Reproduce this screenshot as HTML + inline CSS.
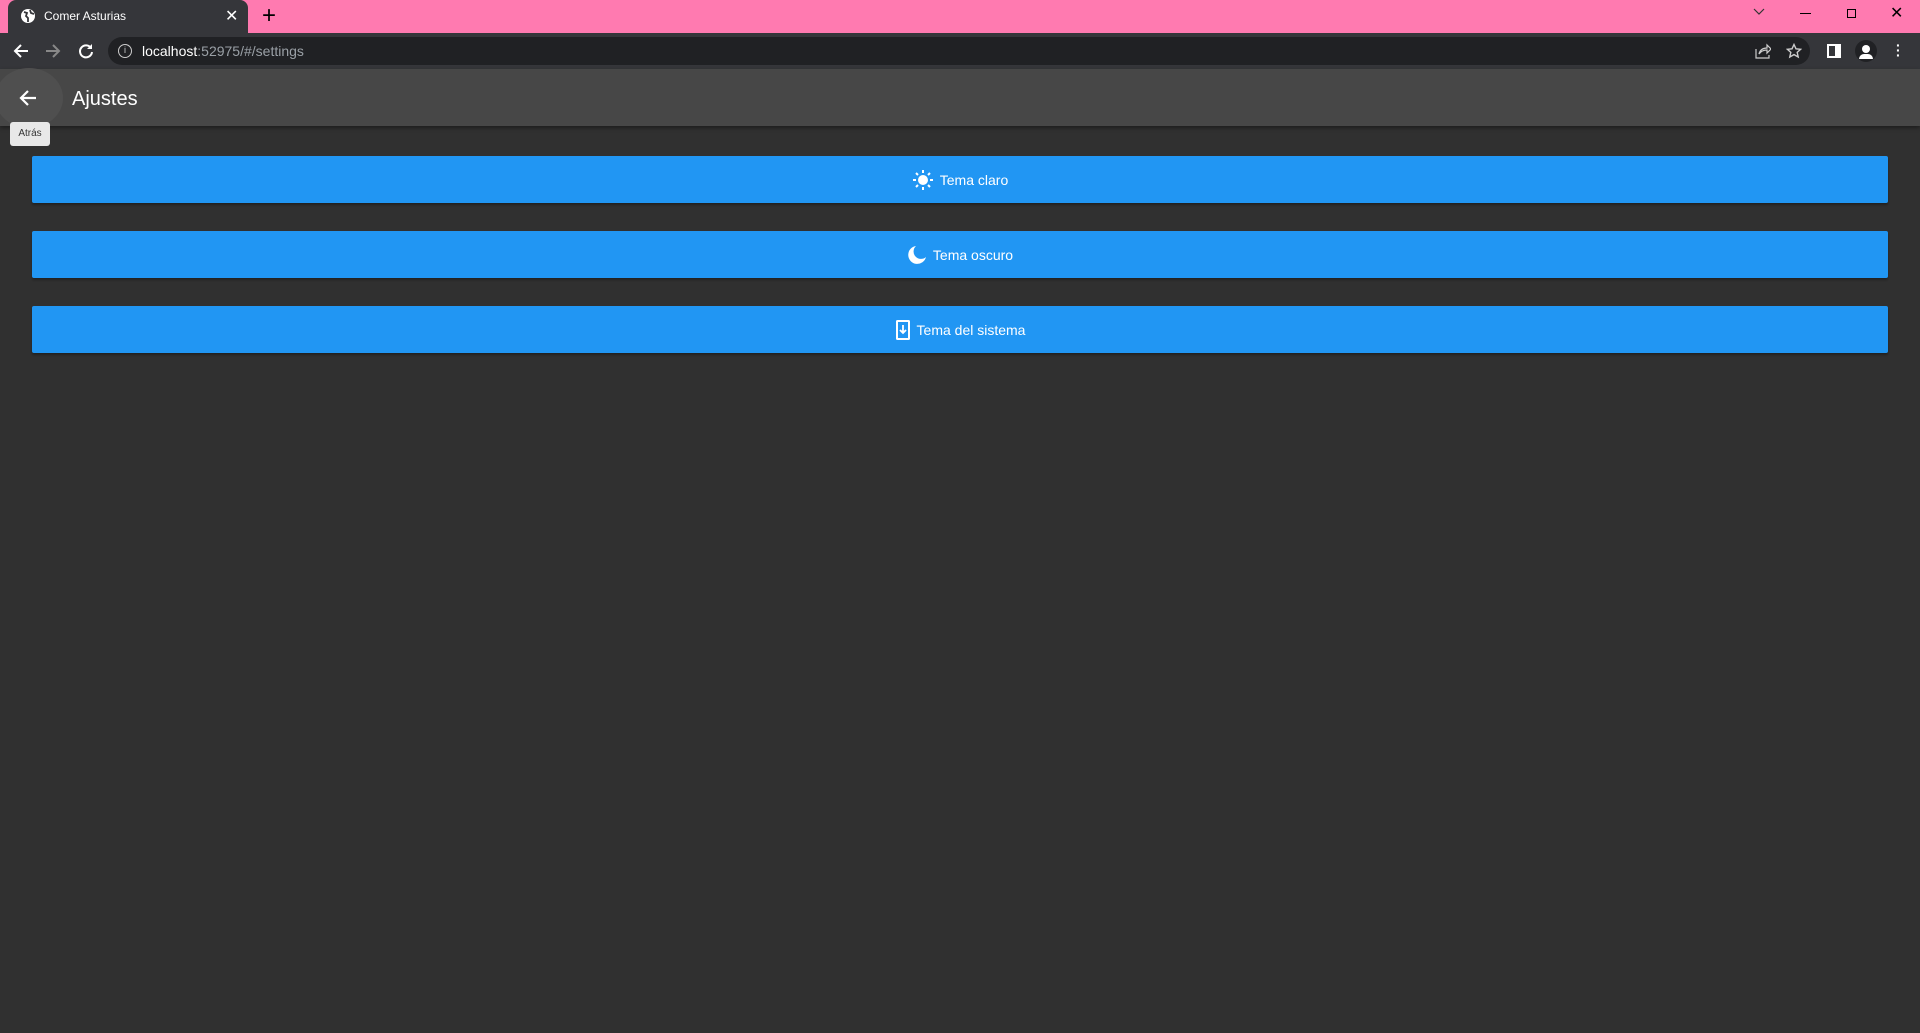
<!DOCTYPE html>
<html><head><meta charset="utf-8"><style>
*{margin:0;padding:0;box-sizing:border-box}
body{width:1920px;height:1033px;background:#303030;font-family:"Liberation Sans",sans-serif;position:relative;overflow:hidden}
.abs{position:absolute}
.btn{position:absolute;left:32px;width:1856px;height:47px;background:#2196F3;border-radius:2px;color:#fff;font-size:14px;display:flex;align-items:center;justify-content:center;gap:6px;box-shadow:0 2px 2px rgba(0,0,0,.3)}
</style></head><body>
<div class="abs" style="left:0;top:0;width:1920px;height:33px;background:#ff7ab0"></div>
<div class="abs" style="left:8px;top:0;width:240px;height:33px;background:#35363a;border-radius:8px 8px 0 0"></div>
<svg class="abs" style="left:20px;top:8px" width="16" height="16" viewBox="0 0 16 16"><circle cx="8" cy="8" r="7" fill="#fff"/><path d="M4 4l3 1-1 3 2 2 0 4M10 2l1 3 3 1" stroke="#35363a" stroke-width="1.8" fill="none"/></svg>
<div class="abs" style="left:44px;top:9px;color:#fff;font-size:12px">Comer Asturias</div>
<div class="abs" style="left:225px;top:6px;color:#fff;font-size:16px">✕</div>
<div class="abs" style="left:262px;top:2px;color:#000;font-size:24px;font-weight:300">+</div>
<svg class="abs" style="left:1753px;top:8px" width="12" height="8" viewBox="0 0 12 8"><path d="M1 1l5 5 5-5" stroke="#333" stroke-width="1.2" fill="none"/></svg>
<div class="abs" style="left:1800px;top:13px;width:11px;height:1px;background:#000"></div>
<div class="abs" style="left:1847px;top:9px;width:9px;height:9px;border:1px solid #000"></div>
<div class="abs" style="left:1890px;top:3px;font-size:16px;color:#000">✕</div>
<div class="abs" style="left:0;top:33px;width:1920px;height:36px;background:#35363a"></div>
<svg class="abs" style="left:12px;top:42px" width="18" height="18" viewBox="0 0 18 18"><path d="M16 9H3M9 3L3 9l6 6" stroke="#fff" stroke-width="2" fill="none"/></svg>
<svg class="abs" style="left:44px;top:42px" width="18" height="18" viewBox="0 0 18 18"><path d="M2 9h13M9 3l6 6-6 6" stroke="#888" stroke-width="2" fill="none"/></svg>
<svg class="abs" style="left:77px;top:42px" width="18" height="18" viewBox="0 0 18 18"><path d="M14 6A6 6 0 1 0 15 10" stroke="#fff" stroke-width="2" fill="none"/><path d="M15 2v5h-5z" fill="#fff"/></svg>
<div class="abs" style="left:108px;top:37px;width:1702px;height:28px;background:#202124;border-radius:14px"></div>
<div class="abs" style="left:118px;top:44px;width:14px;height:14px;border:1.5px solid #ccc;border-radius:50%;color:#ccc;font-size:9px;text-align:center;line-height:11px">i</div>
<div class="abs" style="left:142px;top:43px;font-size:14px;color:#fff">localhost<span style="color:#9aa0a6">:52975/#/settings</span></div>
<svg class="abs" style="left:1755px;top:43px" width="16" height="16" viewBox="0 0 16 16"><path d="M1 6v9h13v-3M4 11c1-4 4-6 8-6V2l4 4-4 4V7c-3 0-6 1-8 4z" stroke="#ccc" stroke-width="1.2" fill="none"/></svg>
<svg class="abs" style="left:1786px;top:43px" width="16" height="16" viewBox="0 0 16 16"><path d="M8 1.5l2 4.3 4.6.5-3.4 3.1 1 4.6L8 11.6 3.8 14l1-4.6L1.4 6.3 6 5.8z" stroke="#ccc" stroke-width="1.4" fill="none"/></svg>
<div class="abs" style="left:1827px;top:44px;width:14px;height:14px;border:2px solid #fff;border-right-width:6px"></div>
<div class="abs" style="left:1855px;top:40px;width:22px;height:22px;border-radius:50%;background:#202124"></div>
<div class="abs" style="left:1862px;top:45px;width:8px;height:8px;border-radius:50%;background:#fff"></div>
<div class="abs" style="left:1859px;top:54px;width:14px;height:5px;border-radius:5px 5px 0 0;background:#fff"></div>
<div class="abs" style="left:1896px;top:43px;color:#fff;font-size:14px;line-height:5px;font-weight:bold">·<br>·<br>·</div>
<div class="abs" style="left:0;top:69px;width:1920px;height:57px;background:#474747;box-shadow:0 2px 4px rgba(0,0,0,.4)"></div>
<div class="abs" style="left:-5px;top:68px;width:68px;height:60px;border-radius:50%;background:#4f4f4f"></div>
<svg class="abs" style="left:17px;top:87px" width="22" height="22" viewBox="0 0 22 22"><path d="M19 11H4M11 4l-7 7 7 7" stroke="#fff" stroke-width="2.2" fill="none"/></svg>
<div class="abs" style="left:72px;top:88px;color:#fff;font-size:20px">Ajustes</div>
<div class="abs" style="left:10px;top:122px;width:40px;height:24px;background:#e8e8e8;border-radius:3px;font-size:10px;color:#333;text-align:center;line-height:24px">Atrás</div>
<div class="btn" style="top:156px"><svg width="22" height="22" viewBox="0 0 22 22"><circle cx="11" cy="11" r="5" fill="#fff"/><g stroke="#fff" stroke-width="2"><path d="M11 1v3M11 18v3M1 11h3M18 11h3M4 4l2 2M16 16l2 2M4 18l2-2M16 6l2-2"/></g></svg>Tema claro</div>
<div class="btn" style="top:231px"><svg width="20" height="20" viewBox="0 0 20 20"><path d="M9 1A9 9 0 1 0 19 12 7 7 0 0 1 9 1z" fill="#fff"/></svg>Tema oscuro</div>
<div class="btn" style="top:306px"><svg width="16" height="22" viewBox="0 0 16 22"><rect x="1" y="1" width="14" height="20" rx="1.5" fill="#fff"/><rect x="3" y="3" width="10" height="16" fill="#2196F3"/><path d="M8 6v8M5 11l3 3 3-3" stroke="#fff" stroke-width="1.8" fill="none"/></svg>Tema del sistema</div>
</body></html>
